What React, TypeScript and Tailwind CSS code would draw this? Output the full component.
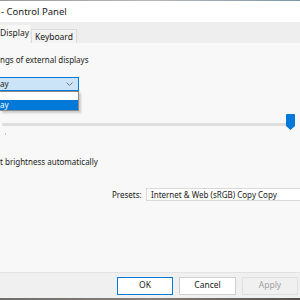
export default function App() {
  return (
    <div className="w-[300px] h-[300px] overflow-hidden flex flex-col bg-[#f8f8f8] text-[8px] leading-[12px] whitespace-nowrap text-[#1a1a1a] font-['Noto_Sans',sans-serif]">
      <div className="h-[1px] shrink-0 bg-gradient-to-r from-[#9a9a9a] via-[#b8b8b8] to-[#7f96aa]" />

      <div className="h-[21px] shrink-0 bg-white flex items-center pl-[1px] text-[9.5px] text-[#222]">
        - Control Panel
      </div>

      <div className="h-[21px] shrink-0 bg-[#eeeeee] flex items-end">
        <div className="h-[18px] w-[30px] bg-[#f8f8f8] flex items-center pb-[2px] text-[8.5px]">Display</div>
        <div className="h-[14px] ml-[1px] px-[3px] bg-[#f3f3f3] border border-b-0 border-[#dcdcdc] flex items-center text-[8.5px]">Keyboard</div>
      </div>

      <div className="flex-1 flex flex-col">
        <div className="mt-[11px] h-[12px]">ngs of external displays</div>

        <div className="relative mt-[11px] w-[79px]">
          <div className="h-[14px] bg-[#cce4f7] border border-[#0078d7] border-l-0 flex items-center justify-between pr-[5px]">
            <span>ay</span>
            <svg width="7" height="4" viewBox="0 0 7 4" fill="none" stroke="#777" strokeWidth="1">
              <path d="M0.5 0.5 L3.5 3.5 L6.5 0.5" />
            </svg>
          </div>
          <div className="absolute left-0 top-[14px] w-[79px] bg-white border border-[#8a8a8a] border-l-0 shadow-[2px_2px_2px_rgba(0,0,0,0.18)] z-10">
            <div className="h-[8px]" />
            <div className="h-[10px] bg-[#0078d7] text-white flex items-center">ay</div>
          </div>
        </div>

        <div className="relative mt-[25px] h-[16px] flex items-center">
          <div className="ml-[2px] w-[286px] h-[3px] rounded-full bg-[#dedede]" />
          <svg className="absolute left-[286px] top-[-2px]" width="9" height="16" viewBox="0 0 9 16">
            <path d="M1 0 H8 Q9 0 9 1 V12 L4.5 16 L0 12 V1 Q0 0 1 0 Z" fill="#0078d7" />
          </svg>
        </div>
        <div className="ml-[5px] mt-[1px] w-[1px] h-[2px] bg-[#c8c8c8]" />

        <div className="mt-[21px] h-[12px]">t brightness automatically</div>

        <div className="mt-[20px] flex items-center">
          <span className="ml-[112px] w-[34px]">Presets:</span>
          <div className="h-[13px] flex-1 bg-white border border-[#d9d9d9] border-r-0 flex items-center pl-[4px]">
            Internet &amp; Web (sRGB) Copy Copy
          </div>
        </div>
      </div>

      <div className="h-[26px] shrink-0 bg-[#f0f0f0] border-t border-[#e2e2e2] flex items-center justify-end gap-[6px] pr-[2px]">
        <button className="w-[56px] h-[18px] bg-white border border-[#0078d7] text-[8.5px] leading-none">OK</button>
        <button className="w-[57px] h-[18px] bg-white border border-[#cfcfcf] text-[8.5px] leading-none">Cancel</button>
        <button className="w-[56px] h-[18px] bg-[#f0f0f0] border border-[#e0e0e0] text-[#a0a0a0] text-[8.5px] leading-none">Apply</button>
      </div>

      <div className="h-[2px] shrink-0 bg-gradient-to-r from-[#6e6e6e] via-[#8a7f76] to-[#55504c]" />
    </div>
  );
}
